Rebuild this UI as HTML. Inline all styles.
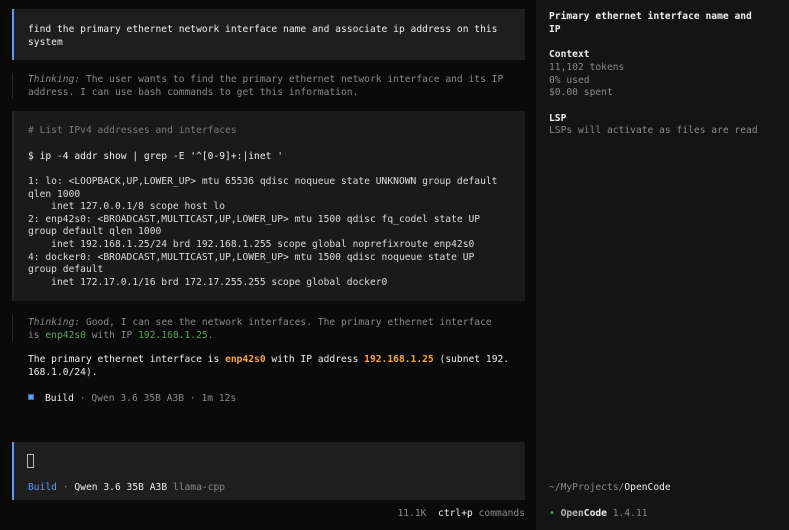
<!DOCTYPE html>
<html><head><style>
*{margin:0;padding:0;box-sizing:border-box}
body{width:789px;height:530px;background:#0a0a0a;overflow:hidden;position:relative;font-family:"DejaVu Sans Mono","Liberation Mono",monospace;font-size:9.6px;line-height:12.6px;color:#e0e0e0}
.a{position:absolute;white-space:pre;letter-spacing:0.02px}
.box{position:absolute}
.m{color:#8a8a8a}
.d{color:#b4b4b4}
.g{color:#5fa35f}
.o{color:#f5a742;font-weight:bold}
.b{color:#5c9cf5}
.w{color:#eeeeee}
.bold{font-weight:bold}
</style></head><body>
<div class="box" style="left:536px;top:0;width:253px;height:530px;background:#141414"></div>
<div class="box" style="left:12px;top:9px;width:513px;height:51px;background:#1e1e1e;border-left:2px solid #5c9cf5"></div>
<div class="a w" style="left:28px;top:24px">find the primary ethernet network interface name and associate ip address on this
system</div>
<div class="box" style="left:12px;top:73px;width:1px;height:26px;background:#2a2a2a"></div>
<div class="a m" style="left:28px;top:74px"><i>Thinking:</i> The user wants to find the primary ethernet network interface and its IP
address. I can use bash commands to get this information.</div>
<div class="box" style="left:12px;top:111px;width:513px;height:190px;background:#1a1a1a;border-left:2px solid #262626"></div>
<div class="a" style="left:28px;top:125px;color:#7a7a7a"># List IPv4 addresses and interfaces</div>
<div class="a w" style="left:28px;top:151px">$ ip -4 addr show | grep -E '^[0-9]+:|inet '</div>
<div class="a w" style="left:28px;top:176px;color:#dcdcdc">1: lo: &lt;LOOPBACK,UP,LOWER_UP&gt; mtu 65536 qdisc noqueue state UNKNOWN group default
qlen 1000
    inet 127.0.0.1/8 scope host lo
2: enp42s0: &lt;BROADCAST,MULTICAST,UP,LOWER_UP&gt; mtu 1500 qdisc fq_codel state UP
group default qlen 1000
    inet 192.168.1.25/24 brd 192.168.1.255 scope global noprefixroute enp42s0
4: docker0: &lt;BROADCAST,MULTICAST,UP,LOWER_UP&gt; mtu 1500 qdisc noqueue state UP
group default
    inet 172.17.0.1/16 brd 172.17.255.255 scope global docker0</div>
<div class="box" style="left:12px;top:315px;width:1px;height:26px;background:#2a2a2a"></div>
<div class="a m" style="left:28px;top:317px"><i>Thinking:</i> Good, I can see the network interfaces. The primary ethernet interface
is <span class="g">enp42s0</span> with IP <span class="g">192.168.1.25</span>.</div>
<div class="a w" style="left:28px;top:354px">The primary ethernet interface is <span class="o">enp42s0</span> with IP address <span class="o">192.168.1.25</span> (subnet 192.
168.1.0/24).</div>
<div class="box" style="left:28px;top:394px;width:6px;height:6px;background:#5c9cf5;border:1px solid #3a6cb0"></div>
<div class="a" style="left:45px;top:393px"><span class="w">Build</span><span class="m"> · Qwen 3.6 35B A3B · 1m 12s</span></div>
<div class="box" style="left:12px;top:442px;width:513px;height:58px;background:#1e1e1e;border-left:2px solid #5c9cf5"></div>
<div class="box" style="left:27px;top:454px;width:7px;height:14px;border:1px solid #bbb"></div>
<div class="a" style="left:28px;top:482px"><span class="b">Build</span><span class="m"> · </span><span class="w">Qwen 3.6 35B A3B</span><span class="m"> llama-cpp</span></div>
<div class="a" style="right:264px;top:508px"><span class="m">11.1K  </span><span class="w">ctrl+p</span><span class="m"> commands</span></div>
<div class="a w bold" style="left:549px;top:11px">Primary ethernet interface name and
IP</div>
<div class="a w bold" style="left:549px;top:49px">Context</div>
<div class="a m" style="left:549px;top:62px">11,102 tokens
0% used
$0.00 spent</div>
<div class="a w bold" style="left:549px;top:113px">LSP</div>
<div class="a m" style="left:549px;top:125px">LSPs will activate as files are read</div>
<div class="a" style="left:549px;top:482px"><span class="m">~/MyProjects/</span><span class="w">OpenCode</span></div>
<div class="a" style="left:549px;top:508px"><span class="g">•</span> <span class="d bold">Open</span><span class="w bold">Code</span><span class="m"> 1.4.11</span></div>
</body></html>
